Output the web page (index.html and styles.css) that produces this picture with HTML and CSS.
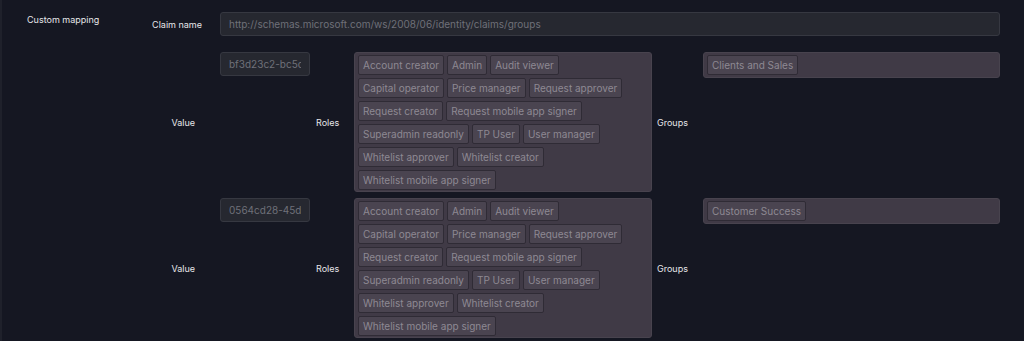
FILE: index.html
```html
<!DOCTYPE html>
<html lang="en">
<head>
    <meta charset="UTF-8">
    <meta name="viewport" content="width=device-width, initial-scale=1.0">
    <title>Custom mapping</title>
    <link rel="stylesheet" href="styles.css">
</head>
<body>
    <div class="section">
        <div class="section-label">Custom mapping</div>
        <div class="section-body">
            <div class="claim-row">
                <label class="field-label" for="claim_name">Claim name</label>
                <input class="text-input" type="text" id="claim_name" value="http://schemas.microsoft.com/ws/2008/06/identity/claims/groups" readonly>
            </div>

            <div class="mapping">
                <div class="value-label">Value</div>
                <input class="text-input value-input" type="text" value="bf3d23c2-bc5c-4d1a-9b7e-2f1c8a0e6d44" readonly>
                <div class="side-label">Roles</div>
                <div class="chip-box roles">
                    <span class="chip">Account creator</span>
                    <span class="chip">Admin</span>
                    <span class="chip">Audit viewer</span>
                    <span class="chip">Capital operator</span>
                    <span class="chip">Price manager</span>
                    <span class="chip">Request approver</span>
                    <span class="chip">Request creator</span>
                    <span class="chip">Request mobile app signer</span>
                    <span class="chip">Superadmin readonly</span>
                    <span class="chip">TP User</span>
                    <span class="chip">User manager</span>
                    <span class="chip">Whitelist approver</span>
                    <span class="chip">Whitelist creator</span>
                    <span class="chip">Whitelist mobile app signer</span>
                </div>
                <div class="side-label groups-label">Groups</div>
                <div class="chip-box groups">
                    <span class="chip">Clients and Sales</span>
                </div>
            </div>

            <div class="mapping">
                <div class="value-label">Value</div>
                <input class="text-input value-input" type="text" value="0564cd28-45d3-4f0b-8c2e-91a7b3d5e210" readonly>
                <div class="side-label">Roles</div>
                <div class="chip-box roles">
                    <span class="chip">Account creator</span>
                    <span class="chip">Admin</span>
                    <span class="chip">Audit viewer</span>
                    <span class="chip">Capital operator</span>
                    <span class="chip">Price manager</span>
                    <span class="chip">Request approver</span>
                    <span class="chip">Request creator</span>
                    <span class="chip">Request mobile app signer</span>
                    <span class="chip">Superadmin readonly</span>
                    <span class="chip">TP User</span>
                    <span class="chip">User manager</span>
                    <span class="chip">Whitelist approver</span>
                    <span class="chip">Whitelist creator</span>
                    <span class="chip">Whitelist mobile app signer</span>
                </div>
                <div class="side-label groups-label">Groups</div>
                <div class="chip-box groups">
                    <span class="chip">Customer Success</span>
                </div>
            </div>
        </div>
    </div>
</body>
</html>
```

FILE: styles.css
```css
html, body {
    height: 100%;
}

body {
    margin: 0;
    background: #151722;
    border-left: 2px solid #1f212b;
    font-family: Inter, "Noto Sans", sans-serif;
    color: #e6e6e9;
    overflow: hidden;
}

.section {
    display: grid;
    grid-template-columns: 123px 1fr;
    padding: 12px 24px 0 25px;
}

.section-label {
    font-size: 9px;
    line-height: 11px;
    padding-top: 2px;
}

.section-body {
    display: flex;
    flex-direction: column;
}

.claim-row {
    display: grid;
    grid-template-columns: 70px 1fr;
    align-items: center;
    margin-bottom: 16px;
}

.field-label,
.value-label,
.side-label {
    font-size: 9px;
    line-height: 11px;
    white-space: nowrap;
}

.field-label {
    text-align: right;
    padding-right: 18px;
}

.text-input {
    box-sizing: border-box;
    height: 24px;
    width: 100%;
    padding: 0 8px;
    background: #262830;
    border: 1px solid #363841;
    border-radius: 3px;
    color: #6f7079;
    font-family: Inter, "Noto Sans", sans-serif;
    font-size: 10px;
    outline: none;
}

.mapping {
    display: grid;
    grid-template-columns: 70px 90px 44px 298px 51px 1fr;
    margin-bottom: 6px;
}

.value-label {
    align-self: center;
    text-align: right;
    padding-right: 25px;
}

.value-input {
    align-self: start;
}

.side-label {
    align-self: center;
    padding-left: 6px;
}

.groups-label {
    padding-left: 5px;
}

.chip-box {
    display: flex;
    flex-wrap: wrap;
    align-content: flex-start;
    gap: 3px 3px;
    background: #403a46;
    border: 1px solid #48434e;
    border-radius: 3px;
}

.roles {
    height: 140px;
    box-sizing: border-box;
    padding: 2px 20px 1px 3px;
}

.groups {
    align-self: start;
    padding: 2px 3px;
}

.chip {
    box-sizing: border-box;
    height: 20px;
    display: flex;
    align-items: center;
    padding: 0 4px;
    background: #4a4450;
    border: 1px solid #2f2b35;
    border-radius: 2px;
    color: #8e8993;
    font-size: 10px;
    white-space: nowrap;
}
```
